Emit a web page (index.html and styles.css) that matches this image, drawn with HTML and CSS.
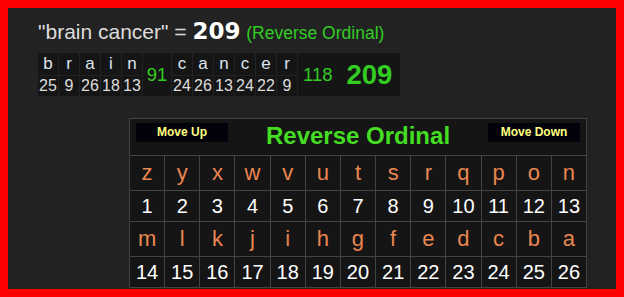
FILE: index.html
```html
<!DOCTYPE html>
<html>
<head>
<meta charset="utf-8">
<link rel="stylesheet" href="styles.css">
</head>
<body>
<div class="frame">
  <div class="title">"brain cancer" = <span class="title-sum">209</span> <span class="title-cipher">(Reverse Ordinal)</span></div>

  <div class="breakdown">
    <div class="bl">b</div><div class="bl">r</div><div class="bl">a</div><div class="bl">i</div><div class="bl">n</div>
    <div class="bw bw1">91</div>
    <div class="bl">c</div><div class="bl">a</div><div class="bl">n</div><div class="bl">c</div><div class="bl">e</div><div class="bl">r</div>
    <div class="btotal"><span class="bw">118</span><span class="bsum">209</span></div>
    <div class="bn">25</div><div class="bn">9</div><div class="bn">26</div><div class="bn">18</div><div class="bn">13</div>
    <div class="bn">24</div><div class="bn">26</div><div class="bn">13</div><div class="bn">24</div><div class="bn">22</div><div class="bn">9</div>
  </div>

  <div class="cipher">
    <div class="cipher-head">
      <div class="btn btn-up">Move Up</div>
      <div class="cipher-name">Reverse Ordinal</div>
      <div class="btn btn-down">Move Down</div>
    </div>
    <div class="ch">z</div><div class="ch">y</div><div class="ch">x</div><div class="ch">w</div><div class="ch">v</div><div class="ch">u</div><div class="ch">t</div><div class="ch">s</div><div class="ch">r</div><div class="ch">q</div><div class="ch">p</div><div class="ch">o</div><div class="ch">n</div>
    <div class="num">1</div><div class="num">2</div><div class="num">3</div><div class="num">4</div><div class="num">5</div><div class="num">6</div><div class="num">7</div><div class="num">8</div><div class="num">9</div><div class="num">10</div><div class="num">11</div><div class="num">12</div><div class="num">13</div>
    <div class="ch">m</div><div class="ch">l</div><div class="ch">k</div><div class="ch">j</div><div class="ch">i</div><div class="ch">h</div><div class="ch">g</div><div class="ch">f</div><div class="ch">e</div><div class="ch">d</div><div class="ch">c</div><div class="ch">b</div><div class="ch">a</div>
    <div class="num">14</div><div class="num">15</div><div class="num">16</div><div class="num">17</div><div class="num">18</div><div class="num">19</div><div class="num">20</div><div class="num">21</div><div class="num">22</div><div class="num">23</div><div class="num">24</div><div class="num">25</div><div class="num">26</div>
  </div>
</div>
</body>
</html>
```

FILE: styles.css
```css
html, body {
  margin: 0;
  padding: 0;
  background: #ff0000;
}

.frame {
  margin: 8px;
  height: 281px;
  box-sizing: border-box;
  background: #222222;
  padding: 11px 0 0 30px;
  overflow: hidden;
  font-family: "Liberation Sans", Arial, sans-serif;
}

.title {
  font-size: 21px;
  line-height: 24px;
  color: #dddddd;
  white-space: nowrap;
}

.title-sum {
  font-family: "DejaVu Sans", sans-serif;
  font-weight: bold;
  font-size: 23px;
  color: #ffffff;
}

.title-cipher {
  font-size: 17.5px;
  color: #33cc22;
}

.breakdown {
  margin-top: 8px;
  display: grid;
  grid-template-columns: repeat(5, 20px) 28px repeat(6, 20px) 102px;
  grid-template-rows: 22px 20px;
  gap: 1px;
  width: max-content;
  font-size: 16px;
}

.breakdown > div {
  background: #151515;
  text-align: center;
}

.bl {
  font-size: 17px;
  line-height: 22px;
  color: #dde6f0;
}

.bn {
  line-height: 20px;
  color: #dddddd;
}

.bw {
  color: #33cc22;
  font-size: 18.5px;
}

.bw1 {
  grid-row: span 2;
  display: flex;
  align-items: center;
  justify-content: center;
}

.btotal {
  grid-row: span 2;
  display: flex;
  align-items: center;
  padding-left: 5px;
  gap: 14px;
}

.bsum {
  color: #33cc22;
  font-weight: bold;
  font-size: 27.5px;
}

.cipher {
  margin: 22px 0 0 91px;
  width: 458px;
  box-sizing: border-box;
  display: grid;
  grid-template-columns: repeat(13, 1fr);
  grid-template-rows: 36px 34px 30px 34px 30px;
  gap: 1px;
  padding: 1px;
  background: #444444;
}

.cipher > div {
  background: #151515;
  text-align: center;
}

.cipher-head {
  grid-column: 1 / -1;
  display: grid;
  grid-template-columns: 1fr auto 1fr;
  align-items: start;
  padding: 0 6px;
}

.btn {
  margin-top: 4px;
  width: 92px;
  height: 19px;
  background: #02020a;
  color: #ffff80;
  font-weight: bold;
  font-size: 12px;
  line-height: 19px;
  text-align: center;
}

.btn-up {
  justify-self: start;
}

.btn-down {
  justify-self: end;
}

.cipher-name {
  color: #44dd22;
  font-weight: bold;
  font-size: 24px;
  line-height: 34px;
}

.ch {
  color: #ea8650;
  font-size: 22px;
  line-height: 34px;
}

.num {
  color: #ffffff;
  font-size: 20px;
  line-height: 30px;
}
```
